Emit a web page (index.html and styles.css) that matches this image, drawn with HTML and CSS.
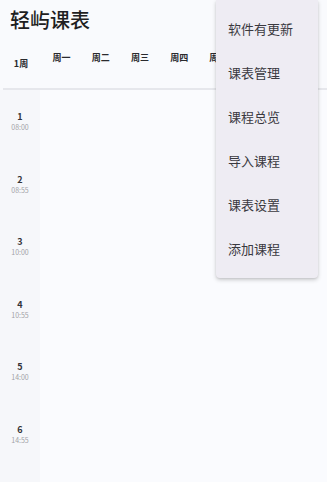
FILE: index.html
```html
<!DOCTYPE html>
<html lang="zh">
<head>
<meta charset="utf-8">
<link rel="stylesheet" href="styles.css">
</head>
<body>
<div class="app">
  <h1 class="title">轻屿课表</h1>
  <div class="head">
    <div class="week">1周</div>
    <div class="day">周一</div>
    <div class="day">周二</div>
    <div class="day">周三</div>
    <div class="day">周四</div>
    <div class="day">周五</div>
    <div class="day">周六</div>
    <div class="day">周日</div>
  </div>
  <div class="divider"></div>
  <div class="body">
    <div class="times">
      <div class="slot"><span class="num">1</span><span class="time">08:00</span></div>
      <div class="slot"><span class="num">2</span><span class="time">08:55</span></div>
      <div class="slot"><span class="num">3</span><span class="time">10:00</span></div>
      <div class="slot"><span class="num">4</span><span class="time">10:55</span></div>
      <div class="slot"><span class="num">5</span><span class="time">14:00</span></div>
      <div class="slot"><span class="num">6</span><span class="time">14:55</span></div>
    </div>
    <div class="grid"></div>
  </div>
  <div class="menu">
    <div class="item">软件有更新</div>
    <div class="item">课表管理</div>
    <div class="item">课程总览</div>
    <div class="item">导入课程</div>
    <div class="item">课表设置</div>
    <div class="item">添加课程</div>
  </div>
</div>
</body>
</html>
```
FILE: styles.css
```css
html, body {
  margin: 0;
  padding: 0;
  width: 327px;
  height: 482px;
  overflow: hidden;
  background: #f9fafd;
  font-family: "Noto Sans CJK SC", "Noto Sans", Roboto, sans-serif;
}
.app {
  position: relative;
  width: 327px;
  height: 482px;
}
.title {
  margin: 0;
  padding: 7px 0 0 10px;
  height: 29px;
  font-size: 20px;
  line-height: 26px;
  font-weight: 500;
  color: #1f1f22;
}
.head {
  display: grid;
  grid-template-columns: 42px repeat(7, 39.2px);
  height: 52px;
}
.week {
  font-size: 9px;
  font-weight: 700;
  color: #2a2a2e;
  text-align: center;
  padding-top: 22px;
  line-height: 12px;
}
.day {
  font-size: 9px;
  font-weight: 700;
  color: #2a2a2e;
  text-align: center;
  padding-top: 16px;
  line-height: 12px;
}
.divider {
  height: 2px;
  margin-left: 3px;
  background: #e6e7ec;
}
.body {
  display: flex;
  height: 393px;
}
.times {
  width: 40px;
  background: #f6f7fa;
  display: flex;
  flex-direction: column;
}
.slot {
  height: 62.5px;
  display: flex;
  flex-direction: column;
  align-items: center;
  padding-top: 22px;
  box-sizing: border-box;
}
.num {
  font-size: 9px;
  font-weight: 700;
  color: #333338;
  line-height: 10px;
}
.time {
  font-size: 7px;
  color: #a2a2a6;
  line-height: 10px;
}
.grid {
  flex: 1;
  background: #fafbfe;
}
.menu {
  position: absolute;
  left: 216px;
  top: 0;
  width: 102px;
  padding: 7px 0;
  background: #eeecf3;
  border-radius: 0 0 4px 4px;
  box-shadow: 0 2px 4px rgba(0,0,0,0.18), 0 1px 2px rgba(0,0,0,0.08);
}
.item {
  height: 44px;
  line-height: 44px;
  padding-left: 12px;
  font-size: 13px;
  color: #3a393f;
}
```
